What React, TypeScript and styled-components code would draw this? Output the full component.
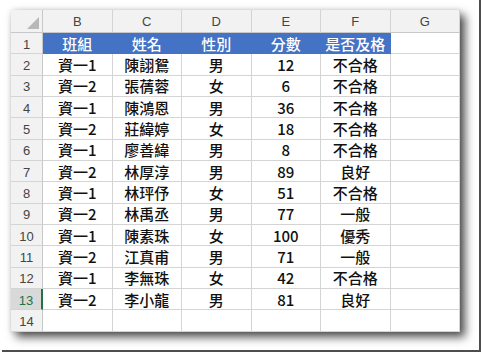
import { Fragment } from "react";
import styled, { createGlobalStyle } from "styled-components";

const GlobalStyle = createGlobalStyle`
  html, body {
    margin: 0;
    padding: 0;
    background: #ffffff;
  }
`;

const Frame = styled.div`
  box-sizing: border-box;
  width: 479px;
  height: 352px;
  margin-left: 2px;
  padding: 10px 0 0 9px;
  border-right: 2px solid #4d4d4d;
  border-bottom: 2px solid #4d4d4d;
  background: #ffffff;
`;

const Sheet = styled.div`
  display: grid;
  grid-template-columns: 32px repeat(6, 69.5px);
  grid-template-rows: 23px repeat(14, 21.35px);
  width: 449px;
  background: #ffffff;
  box-shadow: 5px 5px 9px rgba(0, 0, 0, 0.7), 0 0 5px rgba(0, 0, 0, 0.12);
  font-family: "Noto Sans CJK TC", "Noto Sans", sans-serif;
`;

const Corner = styled.div`
  position: relative;
  background: #f2f2f2;
  border-right: 1px solid #c8c8c8;
  border-bottom: 1px solid #c8c8c8;
  &::after {
    content: "";
    position: absolute;
    right: 3px;
    bottom: 3px;
    width: 0;
    height: 0;
    border-left: 12px solid transparent;
    border-bottom: 12px solid #b8b8b8;
  }
`;

const ColHead = styled.div`
  display: flex;
  align-items: center;
  justify-content: center;
  background: #f2f2f2;
  border-right: 1px solid #d4d4d4;
  border-bottom: 1px solid #c8c8c8;
  color: #444444;
  font-family: "Liberation Sans", Arial, sans-serif;
  font-size: 13px;
`;

const RowHead = styled.div<{ $active?: boolean }>`
  display: flex;
  align-items: center;
  justify-content: center;
  box-sizing: border-box;
  background: ${(p) => (p.$active ? "#d9d9d9" : "#f2f2f2")};
  border-right: ${(p) => (p.$active ? "2px solid #217346" : "1px solid #c8c8c8")};
  border-bottom: 1px solid #d4d4d4;
  color: ${(p) => (p.$active ? "#217346" : "#444444")};
  font-family: "Liberation Sans", Arial, sans-serif;
  font-size: 13px;
  padding-top: 2px;
`;

const Cell = styled.div<{ $head?: boolean }>`
  display: flex;
  align-items: center;
  justify-content: center;
  box-sizing: border-box;
  background: ${(p) => (p.$head ? "#4472c4" : "#ffffff")};
  border-right: 1px solid ${(p) => (p.$head ? "#4472c4" : "#d4d4d4")};
  border-bottom: 1px solid ${(p) => (p.$head ? "#4472c4" : "#d4d4d4")};
  color: ${(p) => (p.$head ? "#ffffff" : "#111111")};
  font-size: 15px;
  font-weight: 500;
  line-height: 1;
  white-space: nowrap;
`;

const columns = ["B", "C", "D", "E", "F", "G"];
const header = ["班組", "姓名", "性別", "分數", "是否及格"];

const rows: string[][] = [
  ["資一1", "陳詡鴛", "男", "12", "不合格"],
  ["資一2", "張蒨蓉", "女", "6", "不合格"],
  ["資一1", "陳鴻恩", "男", "36", "不合格"],
  ["資一2", "莊緯婷", "女", "18", "不合格"],
  ["資一1", "廖善緯", "男", "8", "不合格"],
  ["資一2", "林厚淳", "男", "89", "良好"],
  ["資一1", "林玶伃", "女", "51", "不合格"],
  ["資一2", "林禹丞", "男", "77", "一般"],
  ["資一1", "陳素珠", "女", "100", "優秀"],
  ["資一2", "江真甫", "男", "71", "一般"],
  ["資一1", "李無珠", "女", "42", "不合格"],
  ["資一2", "李小龍", "男", "81", "良好"],
];

export default function App() {
  return (
    <>
      <GlobalStyle />
      <Frame>
        <Sheet>
          <Corner />
          {columns.map((c) => (
            <ColHead key={c}>{c}</ColHead>
          ))}
          <RowHead>1</RowHead>
          {header.map((h) => (
            <Cell key={h} $head>
              {h}
            </Cell>
          ))}
          <Cell />
          {rows.map((r, i) => (
            <Fragment key={i}>
              <RowHead $active={i === 11}>{i + 2}</RowHead>
              {r.map((v, j) => (
                <Cell key={j}>{v}</Cell>
              ))}
              <Cell />
            </Fragment>
          ))}
          <RowHead>14</RowHead>
          {columns.map((c) => (
            <Cell key={"e" + c} />
          ))}
        </Sheet>
      </Frame>
    </>
  );
}
